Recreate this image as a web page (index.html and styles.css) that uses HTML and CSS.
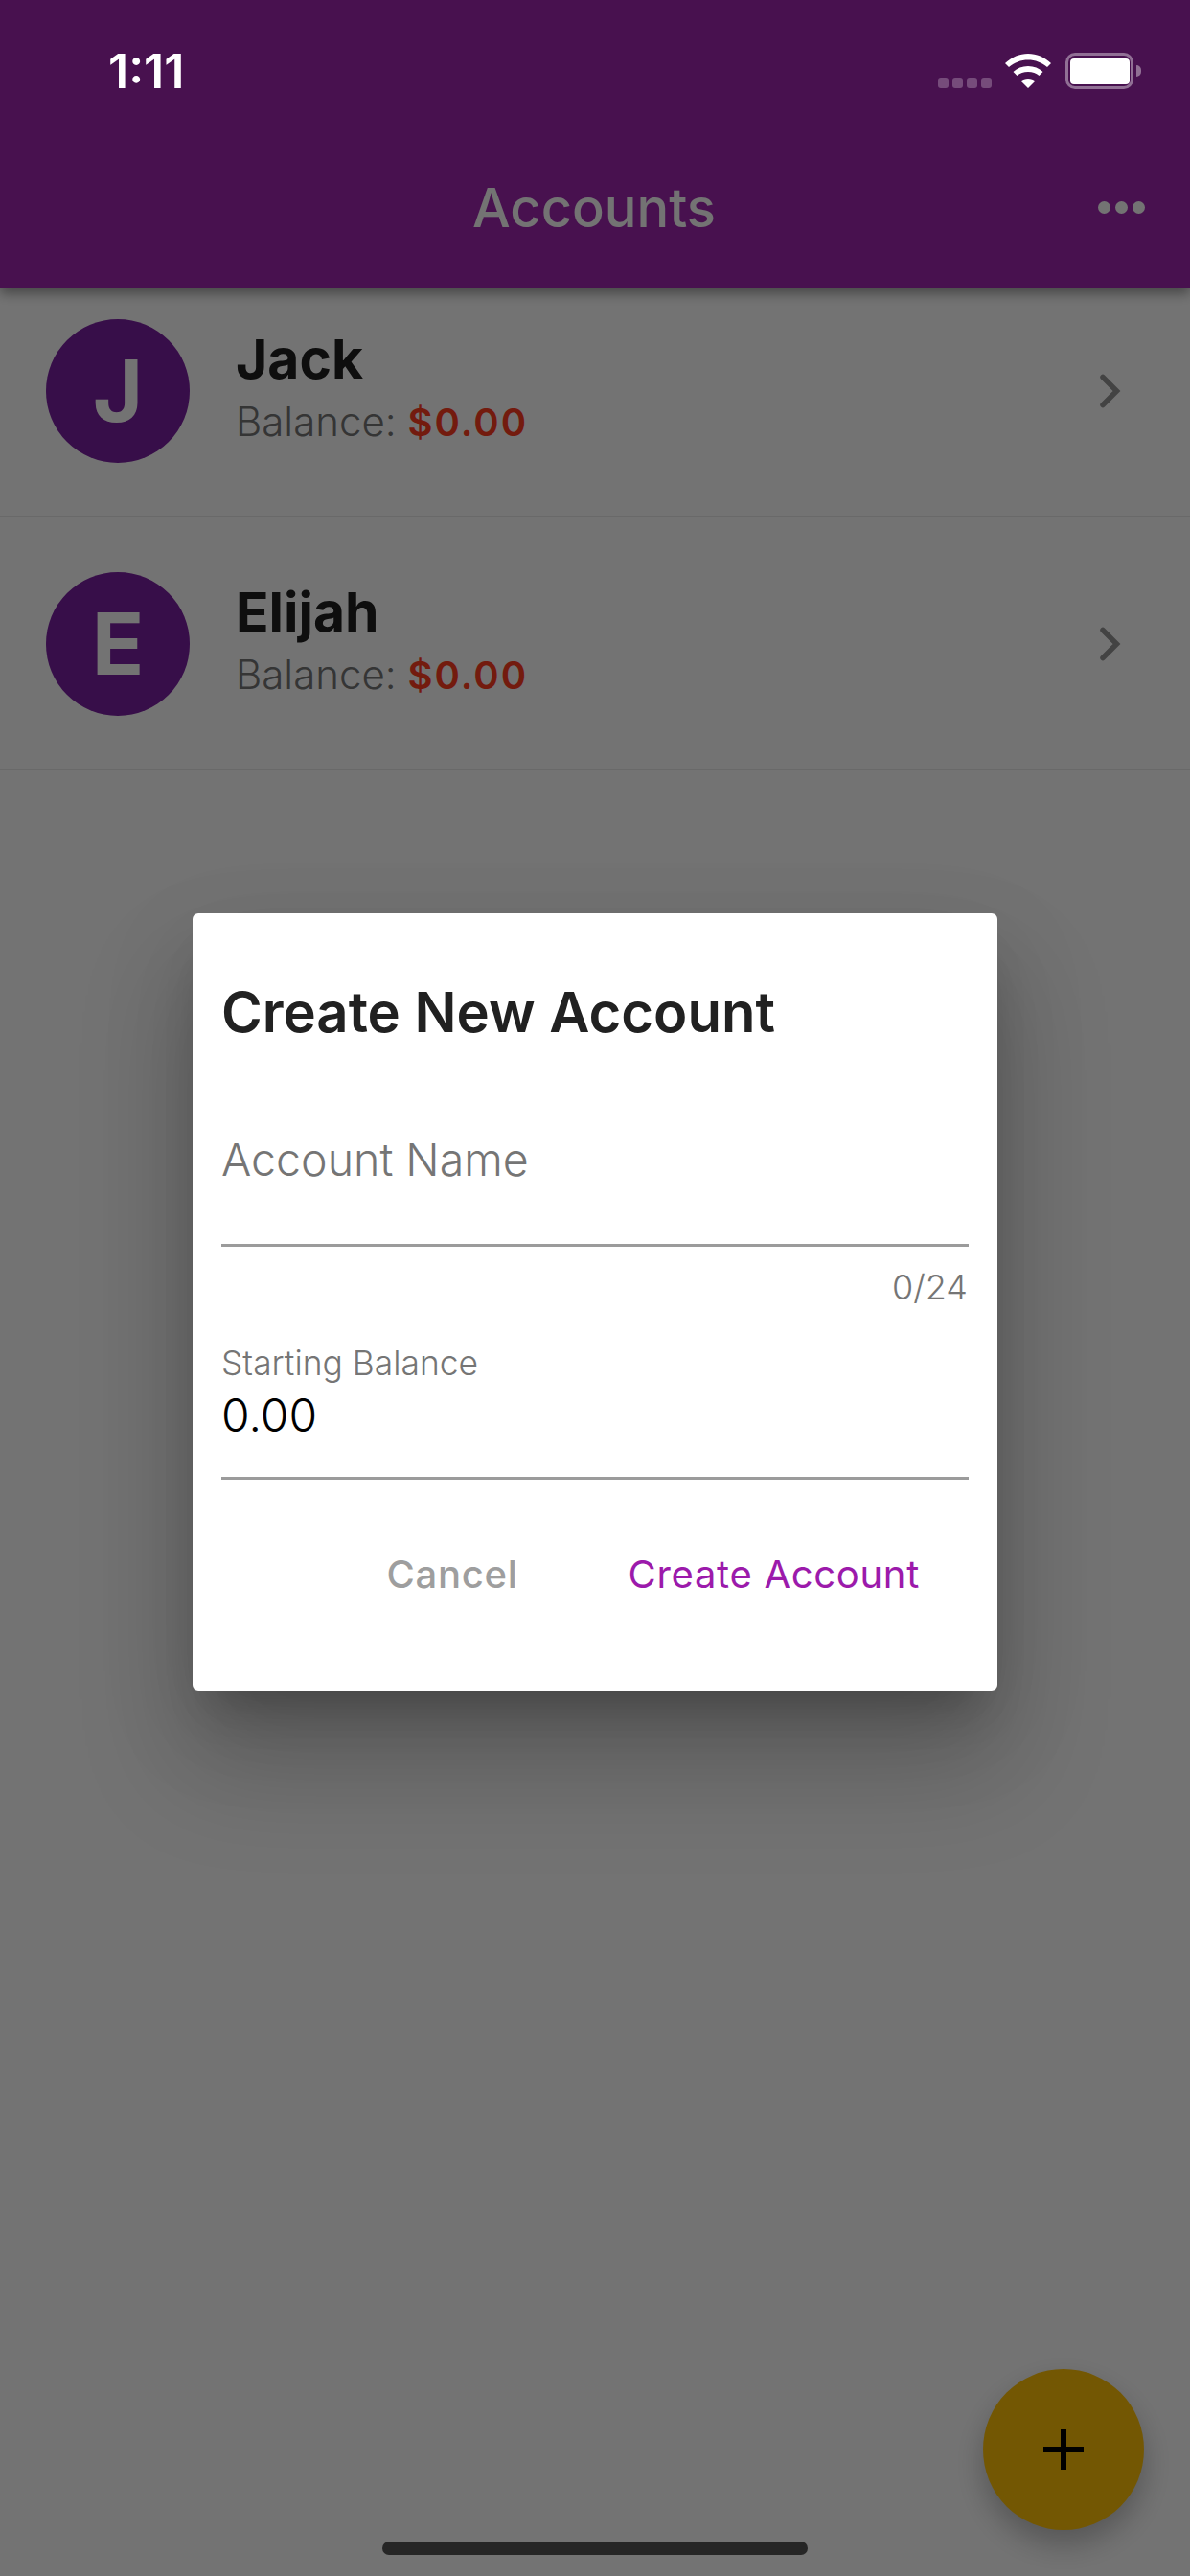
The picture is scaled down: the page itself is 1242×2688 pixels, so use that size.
FILE: index.html
```html
<!DOCTYPE html>
<html lang="en">
<head>
<meta charset="utf-8">
<title>Accounts</title>
<link rel="stylesheet" href="styles.css">
</head>
<body>
<div class="app">
  <header class="appbar">
    <span></span>
    <h1 class="appbar-title">Accounts</h1>
    <div class="more"><i></i><i></i><i></i></div>
  </header>
  <main class="list">
    <div class="row">
      <div class="avatar">J</div>
      <div class="info">
        <div class="name">Jack</div>
        <div class="balance">Balance: <b>$0.00</b></div>
      </div>
      <svg class="chev" width="24" height="36" viewBox="0 0 24 36"><path d="M4 3.500L18.500 18 4 32.500" fill="none" stroke="#949494" stroke-width="5.500" stroke-linecap="round"/></svg>
    </div>
    <div class="row">
      <div class="avatar">E</div>
      <div class="info">
        <div class="name">Elijah</div>
        <div class="balance">Balance: <b>$0.00</b></div>
      </div>
      <svg class="chev" width="24" height="36" viewBox="0 0 24 36"><path d="M4 3.500L18.500 18 4 32.500" fill="none" stroke="#949494" stroke-width="5.500" stroke-linecap="round"/></svg>
    </div>
  </main>
  <button class="fab"><svg width="42" height="42" viewBox="0 0 42 42"><path d="M18 0h6v18h18v6H24v18h-6V24H0v-6h18z" fill="#000"/></svg></button>
  <div class="scrim">
    <section class="dialog">
      <h2 class="dialog-title">Create New Account</h2>
      <div class="field field-name">Account Name</div>
      <div class="counter">0/24</div>
      <div class="label">Starting Balance</div>
      <div class="field field-value">0.00</div>
      <div class="actions">
        <span class="cancel">Cancel</span>
        <span class="create">Create Account</span>
      </div>
    </section>
  </div>
  <div class="status">
    <span class="time">1:11</span>
    <div class="status-icons">
      <div class="signal"><i></i><i></i><i></i><i></i></div>
      <svg class="wifi" width="48" height="36" viewBox="0 0 48 36"><path d="M24 0C15 0 7 3.500 0 10l4 4C10 9 16.500 6.500 24 6.500S38 9 44 14l4-4C41 3.500 33 0 24 0z M24 13c-6 0-11.500 2-15.500 6l4 4c3-2.500 7-4 11.500-4s8.500 1.500 11.500 4l4-4c-4-4-9.500-6-15.500-6z M24 26c-3 0-5.500 1-7.500 2.500L24 36l7.500-7.500C29.500 27 27 26 24 26z" fill="#fff"/></svg>
      <div class="battery"><span class="battery-fill"></span></div>
      <span class="battery-nub"></span>
    </div>
  </div>
  <div class="home-indicator"></div>
</div>
</body>
</html>
```
FILE: styles.css
```css
* { box-sizing: border-box; }
html, body { margin: 0; padding: 0; }
body { font-family: Inter, "Liberation Sans", sans-serif; background: #fff; }
.app { position: relative; width: 1242px; height: 2688px; overflow: hidden; background: #fff; }

.appbar { position: relative; z-index: 2; height: 300px; padding: 181px 47px 0; background: #a027b0; display: grid; grid-template-columns: 1fr auto 1fr; align-items: start; box-shadow: 0 6px 12px rgba(0,0,0,.4); }
.appbar-title { margin: 0; font-size: 56px; line-height: 72px; font-weight: 500; color: #fff; position: relative; left: -1px; }
.more { justify-self: end; display: flex; gap: 5px; margin-top: 29px; }
.more i { width: 13px; height: 13px; border-radius: 50%; background: #fff; }

.list { margin-top: -24px; }
.row { height: 264px; padding: 57px 48px 0; display: flex; align-items: flex-start; border-bottom: 2px solid #e8e8e8; }
.avatar { width: 150px; height: 150px; border-radius: 50%; background: #7b1fa2; color: #fff; font-size: 90px; line-height: 150px; font-weight: 700; text-align: center; flex: none; }
.info { flex: 1; margin-left: 48px; margin-top: 6px; }
.name { font-size: 57px; line-height: 72px; font-weight: 700; color: #212121; }
.balance { font-size: 42px; line-height: 54px; font-weight: 300; color: #757575; margin-top: 2px; }
.balance b { color: #ff3d1f; font-size: 40px; font-weight: 600; letter-spacing: 2px; }
.chev { margin-top: 57px; margin-right: 23px; }

.fab { position: absolute; right: 48px; bottom: 48px; width: 168px; height: 168px; border: 0; padding: 0; border-radius: 50%; background: #ffc107; display: flex; align-items: center; justify-content: center; box-shadow: 0 15px 30px rgba(0,0,0,.25); }

.scrim { position: absolute; inset: 0; z-index: 3; background: rgba(0,0,0,.55); padding-top: 953px; display: flex; justify-content: center; align-items: flex-start; }
.dialog { width: 840px; padding: 67px 30px 94px; background: #fff; border-radius: 6px; box-shadow: 0 33px 45px -21px rgba(0,0,0,.24), 0 72px 114px 9px rgba(0,0,0,.18), 0 36px 100px 8px rgba(0,0,0,.08); }
.dialog-title { margin: 0; font-size: 58px; line-height: 72px; font-weight: 600; color: #212121; }
.field { border-bottom: 3px solid #9b9b9b; }
.field-name { margin-top: 88px; padding-bottom: 58px; font-size: 46.500px; line-height: 60px; font-weight: 300; color: #757575; }
.counter { margin-top: 18px; padding-right: 1px; text-align: right; font-size: 36px; line-height: 48px; font-weight: 300; color: #757575; }
.label { margin-top: 33px; font-size: 35.400px; line-height: 46px; font-weight: 300; color: #757575; }
.field-value { margin-top: 1px; padding-bottom: 34px; font-size: 48px; line-height: 60px; font-weight: 300; color: #000; }
.actions { margin-top: 72px; padding-right: 51px; display: flex; justify-content: flex-end; gap: 115px; font-size: 40px; letter-spacing: .7px; line-height: 54px; font-weight: 400; }
.cancel { color: #9e9e9e; font-weight: 500; }
.create { color: #9c1aab; }

.status { position: absolute; z-index: 4; top: 0; left: 0; right: 0; height: 120px; padding: 40px 51px 0 113px; display: flex; justify-content: space-between; align-items: flex-start; }
.time { font-size: 50px; line-height: 68px; font-weight: 600; color: #fff; }
.status-icons { position: relative; display: flex; align-items: flex-start; margin-top: 15px; }
.signal { display: flex; gap: 4px; margin-top: 26px; margin-right: 14px; }
.signal i { width: 11px; height: 11px; border-radius: 3px; background: rgba(255,255,255,.25); }
.wifi { margin-top: 1px; margin-right: 15px; }
.battery { width: 71px; height: 38px; padding: 6px 4px 5px 5px; border: 3px solid rgba(255,255,255,.4); border-radius: 10px; }
.battery-fill { display: block; background: #fff; border-radius: 4px; margin: -3px 0 0 -3px; width: calc(100% + 6px); height: calc(100% + 6px); }
.battery-nub { width: 5px; height: 12px; margin: 13px 0 0 3px; background: rgba(255,255,255,.4); border-radius: 0 6px 6px 0; }

.home-indicator { position: absolute; z-index: 4; left: 399px; bottom: 22px; width: 444px; height: 14px; border-radius: 7px; background: #262626; }
```
